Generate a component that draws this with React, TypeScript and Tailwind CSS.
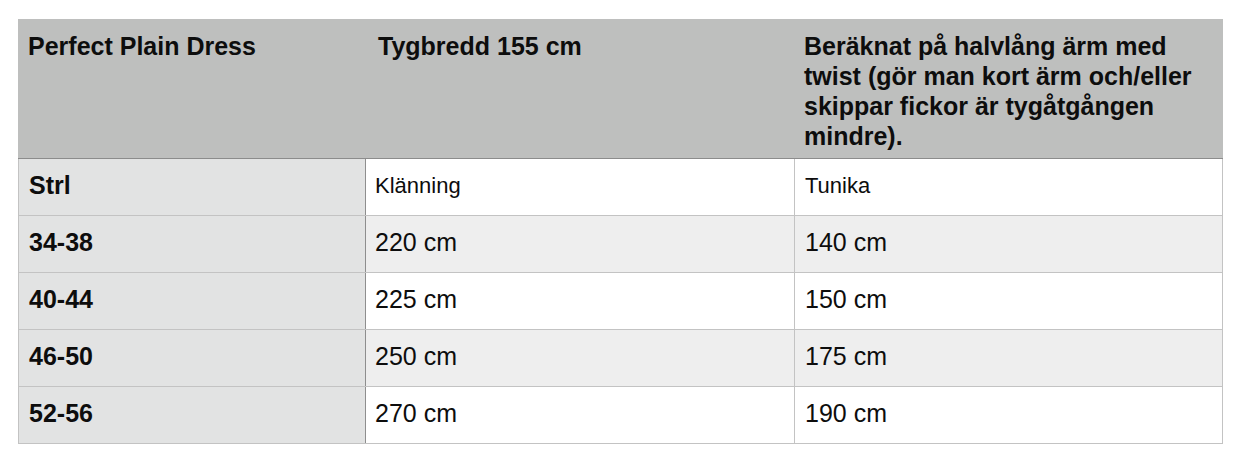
const rows = [
  { size: "34-38", dress: "220 cm", tunic: "140 cm", striped: true },
  { size: "40-44", dress: "225 cm", tunic: "150 cm", striped: false },
  { size: "46-50", dress: "250 cm", tunic: "175 cm", striped: true },
  { size: "52-56", dress: "270 cm", tunic: "190 cm", striped: false },
]

function Row({ first, second, third, striped, small }: { first: string; second: string; third: string; striped: boolean; small?: boolean }) {
  const cellBg = striped ? "bg-[#eeeeee]" : "bg-white"
  const valueSize = small ? "text-[22px]" : "text-[25px]"
  return (
    <div className="grid grid-cols-[348px_429px_428px] h-[57px] border-b border-[#c3c3c3]">
      <div className="flex items-center pb-[3px] pl-[10px] bg-[#e2e3e3] border-l border-l-[#c3c3c3] border-r border-r-[#8e8e8e] font-bold text-[25px]">
        {first}
      </div>
      <div className={`flex items-center pb-[3px] pl-[9px] border-r border-[#c3c3c3] ${cellBg} ${valueSize}`}>
        {second}
      </div>
      <div className={`flex items-center pb-[3px] pl-[10px] border-r border-[#c3c3c3] ${cellBg} ${valueSize}`}>
        {third}
      </div>
    </div>
  )
}

export default function App() {
  return (
    <div className="min-h-screen bg-white pt-[19px] pl-[18px] text-[#0d0d0d] font-['Liberation_Sans',Arial,sans-serif]">
      <div className="w-[1205px]">
        {/* Header */}
        <div className="grid grid-cols-[348px_429px_428px] bg-[#bebfbe] border-b border-[#8c8c8c] font-bold text-[25px] leading-[30px]">
          <div className="pt-[12px] pb-[7px] pl-[10px]">Perfect Plain Dress</div>
          <div className="pt-[12px] pb-[7px] pl-[12px]">Tygbredd 155 cm</div>
          <div className="pt-[12px] pb-[7px] pl-[9px] pr-[11px]">
            Beräknat på halvlång ärm med twist (gör man kort ärm och/eller skippar fickor är tygåtgången mindre).
          </div>
        </div>

        {/* Body */}
        <Row first="Strl" second="Klänning" third="Tunika" striped={false} small />
        {rows.map((r) => (
          <Row key={r.size} first={r.size} second={r.dress} third={r.tunic} striped={r.striped} />
        ))}
      </div>
    </div>
  )
}
